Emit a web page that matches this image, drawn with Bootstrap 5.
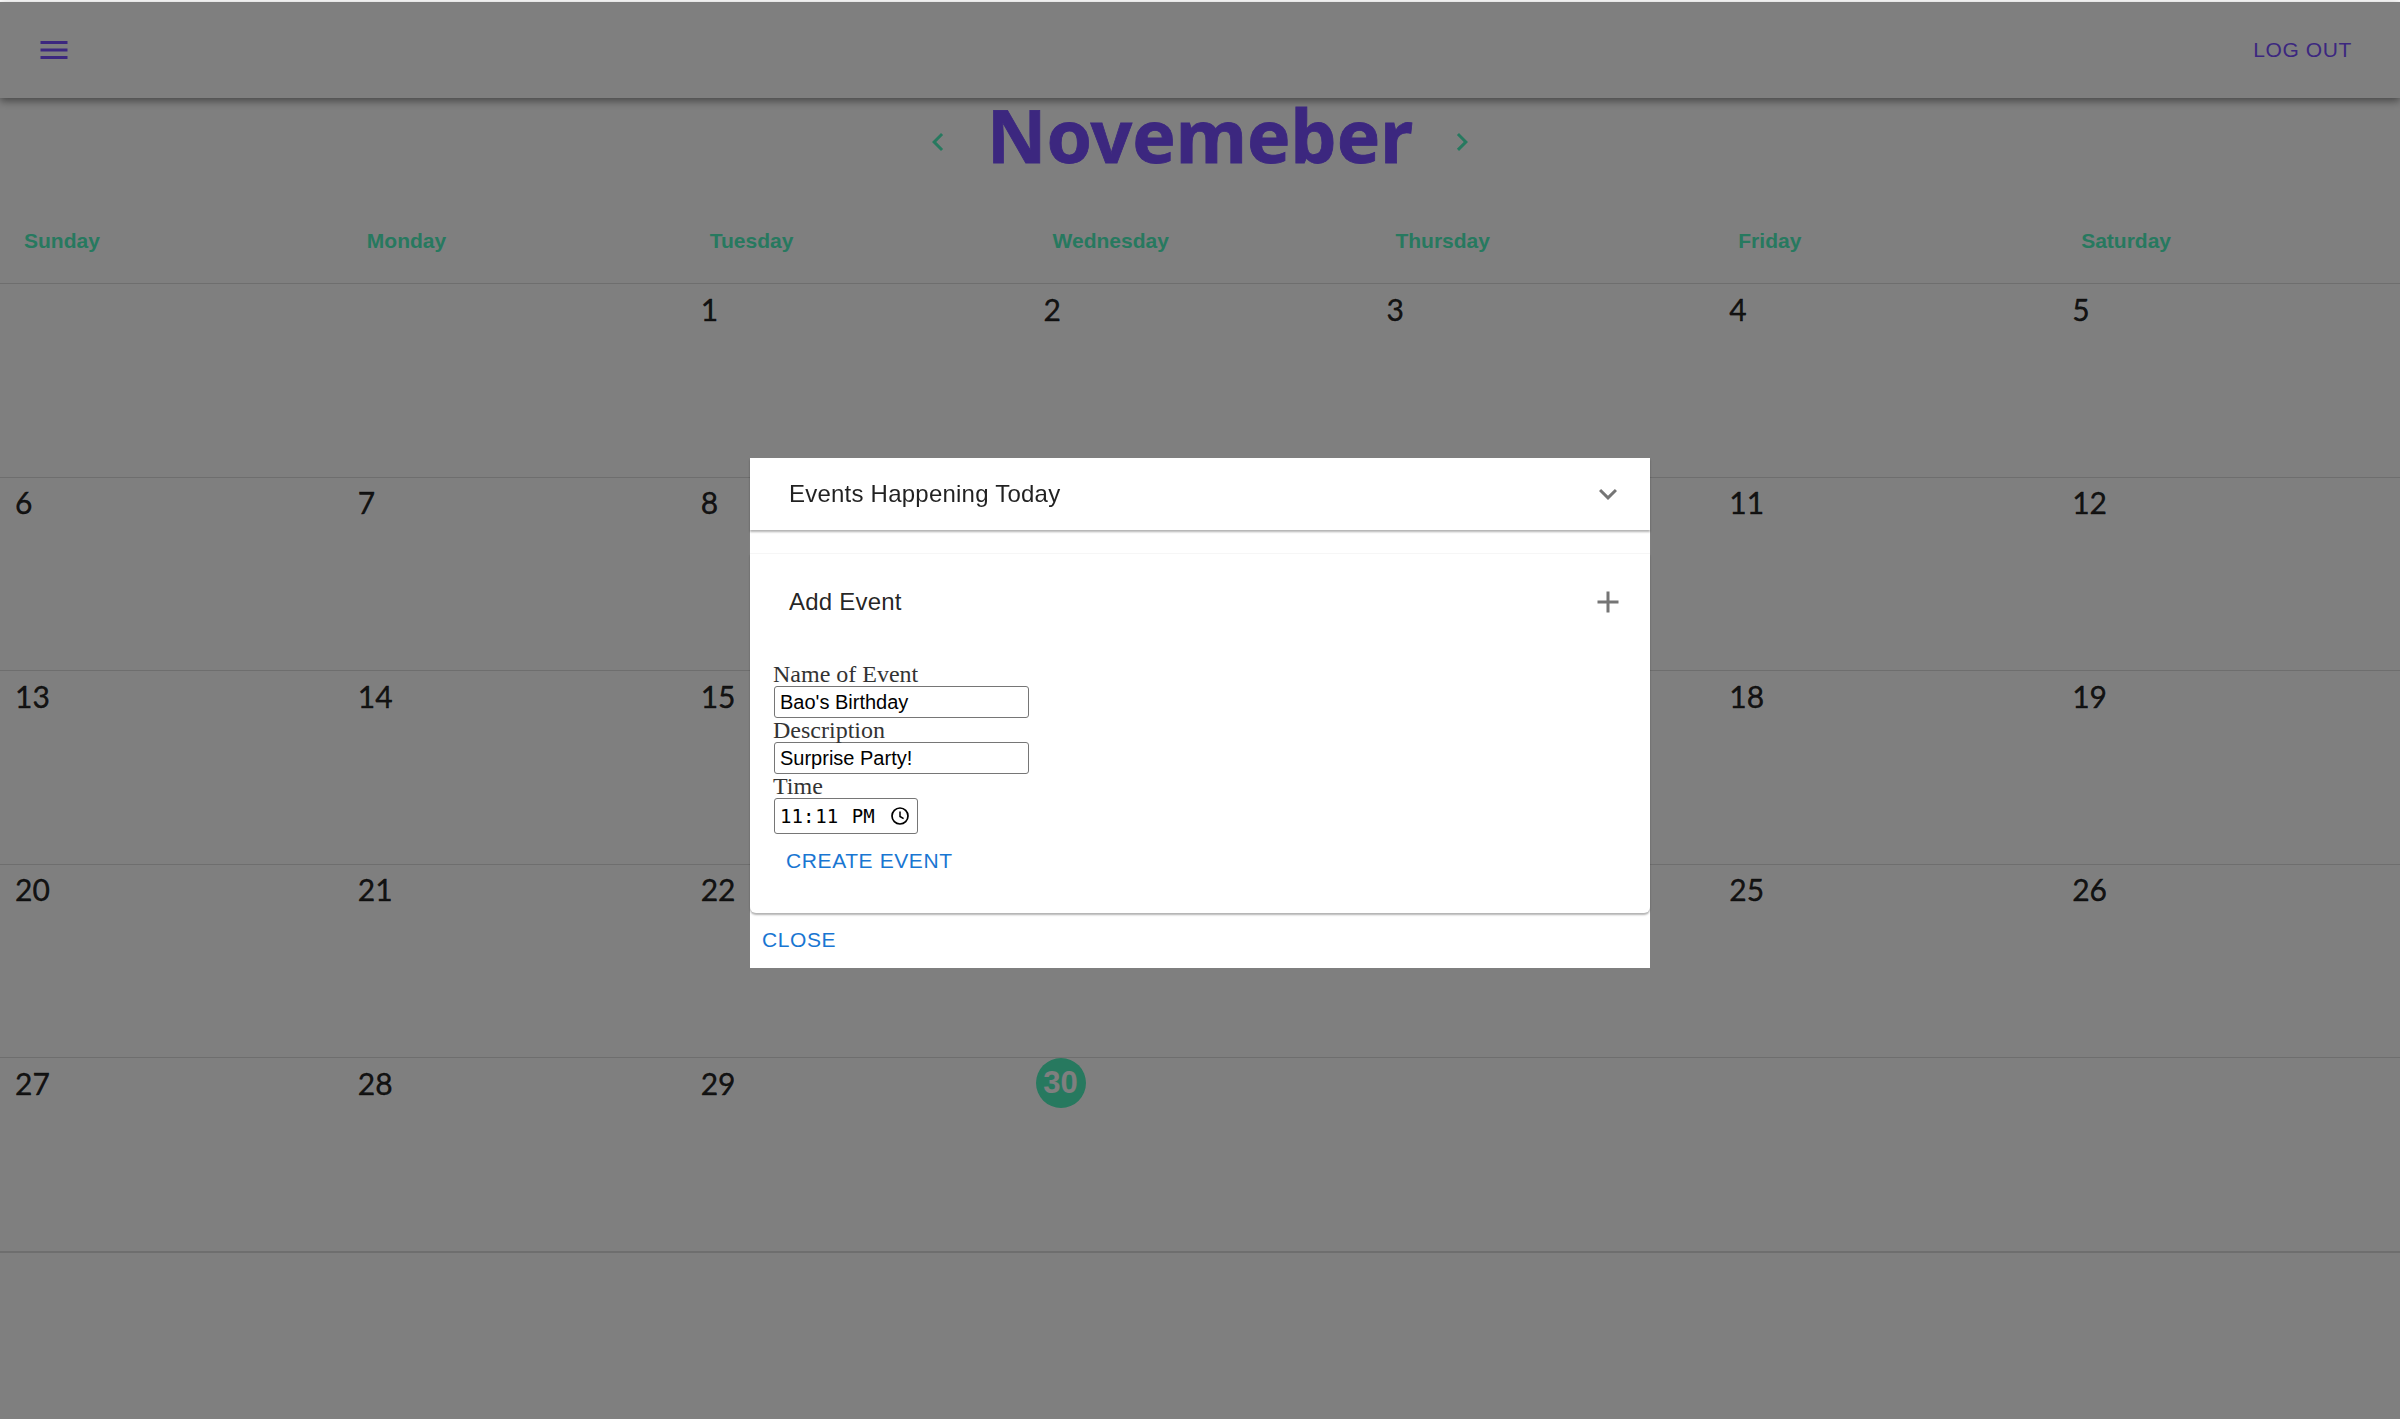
<!DOCTYPE html>
<html lang="en">
<head>
    <meta charset="UTF-8">
    <meta name="viewport" content="width=device-width, initial-scale=1.0">
    <link rel="stylesheet" href="https://cdn.jsdelivr.net/npm/bootstrap@5.3.0/dist/css/bootstrap.min.css">
    <title>Calendar</title>
    <style>
        body { background: #fff; font-family: "Liberation Sans", Arial, sans-serif; overflow: hidden; padding-top: 2px; }
        .top-bar { height: 96px; background: #fff; box-shadow: 0 3px 8px rgba(0,0,0,.45); padding: 0 48px 0 36px; position: relative; }
        .logout-link { color: #784fff; font-size: 21px; letter-spacing: .6px; text-transform: uppercase; text-decoration: none; }
        .month-row { height: 98px; }
        .month-arrow { margin-top: 26px; }
        .month-name { font-family: "Noto Sans", sans-serif; font-weight: 700; font-size: 73px; line-height: 98px; color: #784fff; margin: 0 31px; position: relative; top: -12px; -webkit-text-stroke: .8px #784fff; }
        .week-head { height: 87px; }
        .week-head .col { color: #4ef2be; font-weight: 700; font-size: 21px; padding: 29px 0 0 24px; }
        .day-row { height: 193.6px; border-top: 1px solid #dcdcdc; }
        .day-row .col { padding: 6.5px 0 0 15px; font-family: Lato, sans-serif; font-size: 30px; line-height: 36px; color: rgba(0,0,0,.87); -webkit-text-stroke: .4px rgba(0,0,0,.87); }
        .day-end { border-top: 2px solid #dcdcdc; }
        .today-dot { display: inline-flex; vertical-align: top; width: 50px; height: 50px; margin: -6.5px 0 0 -8px; border-radius: 50%; background: #4ef2be; color: #fff; align-items: center; justify-content: center; font-family: "Liberation Sans", sans-serif; font-weight: 700; font-size: 31px; -webkit-text-stroke: 0; }
        .modal-backdrop.show { top: 2px; opacity: .5; }
        .cal-dialog { max-width: 900px; margin: 458px auto 0; }
        .cal-box { border: 0; border-radius: 0; color: rgba(0,0,0,.87); }
        .panel-one { height: 72px; padding: 0 24px 0 39px; box-shadow: 0 2px 2px rgba(0,0,0,.3); position: relative; }
        .panel-two { margin-top: 23px; height: 360px; border-top: 1px solid #f6f6f6; border-radius: 0 0 6px 6px; box-shadow: 0 2px 2px rgba(0,0,0,.3); position: relative; }
        .panel-head { height: 96px; padding: 0 24px 0 39px; }
        .panel-title { font-size: 24px; letter-spacing: .225px; }
        .event-form { padding: 12px 24px 0; }
        .event-form label { display: block; height: 24px; line-height: 24px; font-family: "Liberation Serif", serif; font-size: 24px; color: #333; margin-left: -1px; }
        .event-form input { display: block; border: 1px solid #767676; border-radius: 3px; background: #fff; color: #000; font-family: "Liberation Sans", sans-serif; font-size: 20px; padding: 1px 5px; outline: 0; }
        .event-form input.text-field { width: 255px; height: 32px; }
        .event-form input.time-field { width: 144px; height: 36px; font-family: "DejaVu Sans Mono", monospace; font-size: 19px; }
        .time-field::-webkit-calendar-picker-indicator { width: 18px; height: 18px; padding: 0; margin: 0 3px 0 0; background: url("data:image/svg+xml,%3Csvg xmlns='http://www.w3.org/2000/svg' viewBox='0 0 18 18'%3E%3Ccircle cx='9' cy='9' r='8' fill='none' stroke='black' stroke-width='1.7'/%3E%3Cpath d='M9 4.5v5l3.6 2.2' fill='none' stroke='black' stroke-width='1.5'/%3E%3C/svg%3E") center / 18px 18px no-repeat; }
        .blue-btn { color: #1976d2; font-size: 21px; letter-spacing: .6px; text-transform: uppercase; background: none; border: 0; padding: 0 12px; line-height: 26px; }
        .create-btn { margin-top: 14px; }
        .close-row { height: 55px; padding: 0 0 2px; }
    </style>
</head>
<body>
<div class="top-bar d-flex align-items-center justify-content-between">
    <svg width="36" height="36" viewBox="0 0 24 24" fill="#784fff"><path d="M3 18h18v-2H3v2zm0-5h18v-2H3v2zm0-7v2h18V6H3z"/></svg>
    <a class="logout-link" href="#">Log out</a>
</div>

<div class="month-row d-flex justify-content-center align-items-start">
    <svg class="month-arrow" width="36" height="36" viewBox="0 0 24 24" fill="#4ef2be"><path d="M15.41 7.41L14 6l-6 6 6 6 1.41-1.41L10.83 12z"/></svg>
    <div class="month-name">Novemeber</div>
    <svg class="month-arrow" width="36" height="36" viewBox="0 0 24 24" fill="#4ef2be"><path d="M10 6L8.59 7.41 13.17 12l-4.58 4.58L10 18l6-6z"/></svg>
</div>

<div class="row g-0 week-head">
    <div class="col">Sunday</div><div class="col">Monday</div><div class="col">Tuesday</div><div class="col">Wednesday</div><div class="col">Thursday</div><div class="col">Friday</div><div class="col">Saturday</div>
</div>
<div id="days"></div>
<div class="day-end"></div>

<div class="modal-backdrop show"></div>
<div class="modal d-block">
    <div class="modal-dialog cal-dialog">
        <div class="modal-content cal-box">
            <div class="panel-one d-flex align-items-center justify-content-between">
                <span class="panel-title">Events Happening Today</span>
                <svg width="36" height="36" viewBox="0 0 24 24" fill="#757575"><path d="M16.59 8.59L12 13.17 7.41 8.59 6 10l6 6 6-6z"/></svg>
            </div>
            <div class="panel-two">
                <div class="panel-head d-flex align-items-center justify-content-between">
                    <span class="panel-title">Add Event</span>
                    <svg width="36" height="36" viewBox="0 0 24 24" fill="#757575"><path d="M19 13h-6v6h-2v-6H5v-2h6V5h2v6h6v2z"/></svg>
                </div>
                <form class="event-form">
                    <label for="evName">Name of Event</label>
                    <input class="text-field" id="evName" type="text" value="Bao's Birthday">
                    <label for="evDesc">Description</label>
                    <input class="text-field" id="evDesc" type="text" value="Surprise Party!">
                    <label for="evTime">Time</label>
                    <input class="time-field" id="evTime" type="time" value="23:11">
                    <button class="blue-btn create-btn" type="button">Create Event</button>
                </form>
            </div>
            <div class="close-row d-flex align-items-center">
                <button class="blue-btn" type="button">Close</button>
            </div>
        </div>
    </div>
</div>

<script>
    // weeks of the month, empty string = blank cell
    const weeks=[
        ["","",1,2,3,4,5],
        [6,7,8,9,10,11,12],
        [13,14,15,16,17,18,19],
        [20,21,22,23,24,25,26],
        [27,28,29,30,"","",""]
    ]
    document.getElementById("days").innerHTML=weeks.map(w=>
        '<div class="row g-0 day-row">'+w.map(d=>
            '<div class="col">'+(d===30?'<span class="today-dot">30</span>':d)+'</div>'
        ).join("")+'</div>'
    ).join("")
</script>
<script src="https://cdn.jsdelivr.net/npm/bootstrap@5.3.0/dist/js/bootstrap.bundle.min.js"></script>
</body>
</html>
